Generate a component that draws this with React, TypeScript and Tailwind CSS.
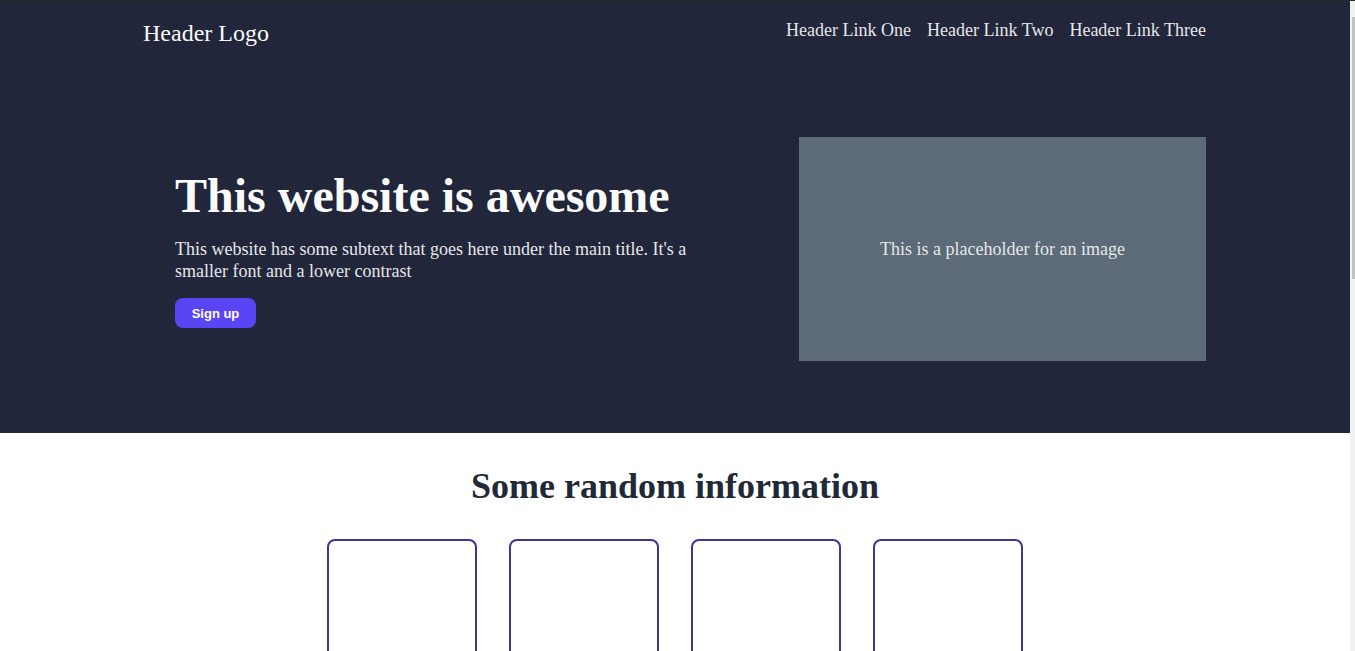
const serif = { fontFamily: '"Liberation Serif", "Times New Roman", serif' };

const Header = () => {
  return (
    <header className="h-[64px] pt-[15px]">
      <div className="w-[1064px] pr-px mx-auto flex items-start justify-between">
        <div className="mt-px text-2xl text-[#f9fafb]">Header Logo</div>
        <nav className="flex gap-4 text-lg text-[#e5e7eb]">
          <a href="#">Header Link One</a>
          <a href="#">Header Link Two</a>
          <a href="#">Header Link Three</a>
        </nav>
      </div>
    </header>
  );
};

const Hero = () => {
  return (
    <section className="py-[72px]">
      <div className="w-[1064px] pr-px mx-auto flex items-center justify-between">
        <div className="pl-8 pt-[2px] w-[560px]">
          <h1 className="text-5xl font-bold text-[#f9fafb] mb-[18px]">This website is awesome</h1>
          <p className="text-lg leading-[22px] text-[#e5e7eb] mb-4">
            This website has some subtext that goes here under the main title. It's a smaller font and a lower contrast
          </p>
          <button
            className="h-[30px] w-[81px] pt-px rounded-lg bg-[#5a45f5] text-[13px] font-bold text-white"
            style={{ fontFamily: '"Liberation Sans", Arial, sans-serif' }}
          >
            Sign up
          </button>
        </div>
        <div className="w-[407px] h-[224px] bg-[#5c6b77] flex items-center justify-center text-lg text-[#e5e7eb]">
          This is a placeholder for an image
        </div>
      </div>
    </section>
  );
};

const Info = () => {
  return (
    <section className="bg-white pt-[33px] pb-16">
      <h2 className="text-4xl font-bold text-[#1f2937] text-center mb-[33px]">Some random information</h2>
      <div className="flex justify-center gap-8">
        {[0, 1, 2, 3].map((i) => (
          <div key={i} className="w-[150px] h-[150px] rounded-lg border-2 border-[#3f3597]" />
        ))}
      </div>
    </section>
  );
};

// the browser's scrollbar, clipped to a 5px strip
const Scrollbar = () => {
  return (
    <div className="w-[5px] h-[650px] bg-[#f1f1f1] pt-[16px] pl-[2px]">
      <div className="h-[262px] bg-[#c1c1c1]" />
    </div>
  );
};

export default function App() {
  return (
    <div className="min-h-screen bg-white flex items-start border-t border-[#2b2b2b]" style={serif}>
      <div className="flex-1 min-w-0">
        <div className="bg-[#22263a]">
          <Header />
          <Hero />
        </div>
        <Info />
      </div>
      <Scrollbar />
    </div>
  );
}
